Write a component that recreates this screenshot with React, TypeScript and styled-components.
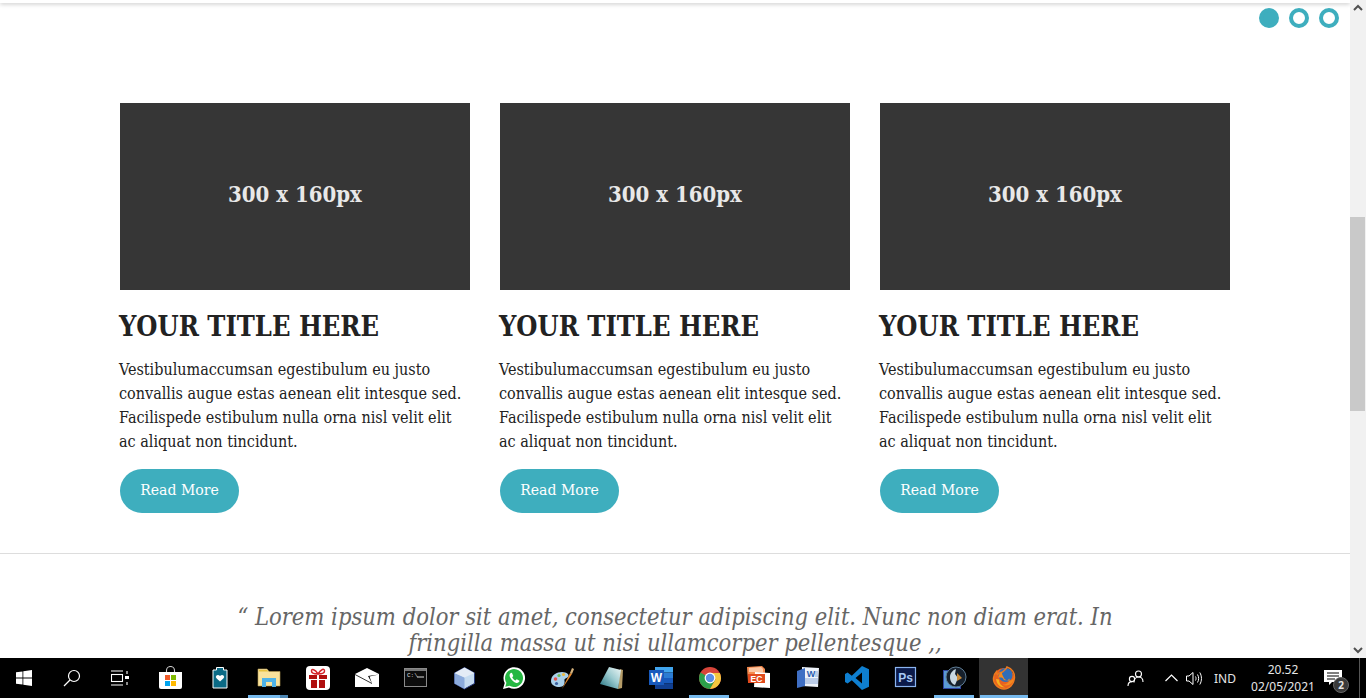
import React, { FC, ReactNode } from 'react'
import styled, { createGlobalStyle } from 'styled-components'

const SERIF = `'DejaVu Serif Condensed', 'DejaVu Serif', 'Liberation Serif', serif`
const TEAL = '#3eaebe'

const GlobalStyle = createGlobalStyle`
  html, body { margin: 0; padding: 0; height: 100%; overflow: hidden; background: #fff; }
  #root { height: 100%; }
  * { box-sizing: border-box; }
`

const Screen = styled.div`
  width: 1366px;
  height: 698px;
  display: flex;
  flex-direction: column;
  overflow: hidden;
  font-family: ${SERIF};
`
const Viewport = styled.div`
  flex: 1;
  min-height: 0;
  display: flex;
`
const Page = styled.main`
  flex: 1;
  min-width: 0;
  overflow: hidden;
  background: #fff;
`
const TopShadow = styled.div`
  height: 3px;
  background: #fff;
  box-shadow: 0 1px 4px rgba(0, 0, 0, 0.25);
`
const Dots = styled.div`
  display: flex;
  justify-content: flex-end;
  gap: 10px;
  padding: 5px 11px 0 0;
`
const Dot = styled.span<{ $active?: boolean }>`
  width: 20px;
  height: 20px;
  border-radius: 50%;
  border: 4px solid ${TEAL};
  background: ${(p) => (p.$active ? TEAL : '#fff')};
`
const Cards = styled.section`
  display: grid;
  grid-template-columns: repeat(3, 350px);
  gap: 30px;
  padding: 75px 0 40px 120px;
  border-bottom: 1px solid #ddd;
`
const Card = styled.article`
  display: flex;
  flex-direction: column;
  align-items: flex-start;
`
const Thumb = styled.div`
  width: 350px;
  height: 187px;
  background: #363636;
  color: #e8e8e8;
  display: flex;
  align-items: center;
  justify-content: center;
  font-size: 22px;
  font-weight: 700;
  padding-bottom: 6px;
`
const Title = styled.h3`
  margin: 19px 0 0 -1px;
  font-size: 27px;
  line-height: 36px;
  font-weight: 700;
  color: #222;
  white-space: nowrap;
`
const Body = styled.p`
  margin: 13px 0 0 -1px;
  font-size: 16px;
  line-height: 24px;
  color: #222;
  white-space: nowrap;
`
const ReadMore = styled.a`
  margin-top: 15px;
  width: 119px;
  height: 44px;
  padding-bottom: 2px;
  border-radius: 22px;
  background: ${TEAL};
  color: #fff;
  font-size: 15.6px;
  display: flex;
  align-items: center;
  justify-content: center;
`
const Quote = styled.blockquote`
  margin: 50px 0 0;
  text-align: center;
  font-size: 23.5px;
  line-height: 26px;
  font-style: italic;
  color: #666;
  white-space: nowrap;
`
const Scrollbar = styled.div`
  width: 16px;
  background: #f1f1f1;
  display: flex;
  flex-direction: column;
  align-items: center;
  justify-content: space-between;
  position: relative;
`
const ScrollThumb = styled.div`
  position: absolute;
  left: 0;
  top: 217px;
  width: 15px;
  height: 194px;
  background: #c9c9c9;
`
const Arrow = styled.svg`
  width: 16px;
  height: 16px;
  display: block;
`

const Taskbar = styled.footer`
  height: 40px;
  flex: none;
  background: #000;
  display: flex;
  align-items: stretch;
  color: #fff;
  font-family: 'Noto Sans', 'Liberation Sans', Arial, sans-serif;
`
const SystemSlot = styled.div`
  width: 48px;
  display: flex;
  align-items: center;
  justify-content: center;
`
const AppSlots = styled.div`
  display: flex;
  margin-left: 2px;
`
const AppSlot = styled.div<{ $open?: boolean; $focused?: boolean; $stacked?: boolean }>`
  width: 49px;
  position: relative;
  display: flex;
  align-items: center;
  justify-content: center;
  background: ${(p) => (p.$focused ? '#333' : 'transparent')};
  &::after {
    content: '';
    display: ${(p) => (p.$open ? 'block' : 'none')};
    position: absolute;
    bottom: 0;
    left: ${(p) => (p.$focused ? '1px' : '4px')};
    right: ${(p) => (p.$focused ? '0' : '5px')};
    height: 3px;
    background: ${(p) =>
      p.$stacked ? 'linear-gradient(to right, #76b9ed 80%, #4d86b3 80%)' : '#76b9ed'};
  }
`
const Tray = styled.div`
  margin-left: auto;
  display: flex;
  align-items: center;
  font-size: 12px;
  color: #e6e6e6;
`
const TrayIcon = styled.span<{ $width: number }>`
  width: ${(p) => p.$width}px;
  display: flex;
  justify-content: center;
`
const Clock = styled.div`
  width: 70px;
  margin-left: 1px;
  text-align: center;
  line-height: 17px;
  font-size: 12px;
  white-space: nowrap;
`
const Notify = styled.div`
  width: 30px;
  height: 100%;
  position: relative;
  display: flex;
  align-items: center;
  justify-content: center;
`
const Badge = styled.span`
  position: absolute;
  left: 15px;
  top: 19px;
  width: 16px;
  height: 16px;
  border-radius: 50%;
  background: #3a3a3a;
  border: 1px solid #666;
  font-size: 10px;
  font-weight: 700;
  display: flex;
  align-items: center;
  justify-content: center;
`
const ShowDesktop = styled.div`
  width: 7px;
  height: 100%;
  margin-left: 11px;
  border-left: 1px solid #555;
`

const Ico: FC<{ children: ReactNode }> = ({ children }) => (
  <svg width={24} height={24} viewBox="0 0 24 24" fill="none">
    {children}
  </svg>
)

const SANS = "'Liberation Sans', sans-serif"

const icons: { key: string; open?: boolean; focused?: boolean; stacked?: boolean; svg: ReactNode }[] = [
  {
    key: 'store',
    svg: (
      <Ico>
        <path d="M7.500 7V4.500a4 4 0 0 1 8 0V7" stroke="#ccc" strokeWidth="1.100" />
        <path d="M0 6h23v15a2 2 0 0 1-2 2H2a2 2 0 0 1-2-2z" fill="#fff" />
        <rect x="6" y="9" width="5" height="5" fill="#ef5a29" />
        <rect x="12" y="9" width="5" height="5" fill="#7fba00" />
        <rect x="6" y="15" width="5" height="5" fill="#00a4ef" />
        <rect x="12" y="15" width="5" height="5" fill="#ffb900" />
      </Ico>
    ),
  },
  {
    key: 'battery',
    svg: (
      <Ico>
        <path d="M8.500 1.500h7v2.500h3.500v18H5V4h3.500z" fill="#0b6a85" stroke="#fff" strokeWidth="1" />
        <path d="M12 15.500l-3.300-3a2 2 0 0 1-.2-3c.9-.8 2.300-.7 3.500.5 1.200-1.200 2.600-1.300 3.500-.5a2 2 0 0 1-.2 3z" fill="#fff" />
      </Ico>
    ),
  },
  {
    key: 'files',
    open: true,
    stacked: true,
    svg: (
      <Ico>
        <path d="M1 3h9l2 2.500h11V20H1z" fill="#f9e29c" stroke="#b59a52" strokeWidth=".6" />
        <path d="M2 4h8l1.200 1.500H2z" fill="#e8c13f" />
        <path d="M5 12h14v9h-4v-5H9v5H5z" fill="#4fb3e8" />
      </Ico>
    ),
  },
  {
    key: 'gift',
    svg: (
      <Ico>
        <rect width="24" height="24" rx="4" fill="#fff" />
        <path d="M3 9h8v4H3zM13 9h8v4h-8zM5 14h6v8H5zM13 14h6v8h-6z" fill="#b00f0f" />
        <path d="M12 8C9 3 5.500 2.500 5.500 5S9 8 12 8c3 0 6.500 0 6.500-3S15 3 12 8z" stroke="#d4232a" strokeWidth="1.500" />
      </Ico>
    ),
  },
  {
    key: 'mail',
    svg: (
      <Ico>
        <path d="M12 2l12 6v13H0V8z" fill="#fff" />
        <path d="M24 8.500L13 10l4 7.500-2.500-7z" fill="#000" />
        <path d="M0 8.500L17 17.500" stroke="#000" strokeWidth=".8" />
      </Ico>
    ),
  },
  {
    key: 'cmd',
    svg: (
      <Ico>
        <rect x=".5" y="2.500" width="22" height="18" fill="#0c0c0c" stroke="#8a8a8a" />
        <rect x="1" y="3" width="21" height="2" fill="#777" />
        <text x="3" y="11" fontSize="6" fill="#ddd" fontFamily="'Liberation Mono', monospace">C:\</text>
        <path d="M13 11h7" stroke="#ddd" />
      </Ico>
    ),
  },
  {
    key: 'cube',
    svg: (
      <Ico>
        <path d="M11.500 1.500l10 5.500v10.500l-10 5.500-10-5.500V7z" fill="#c6dcf0" stroke="#26387a" />
        <path d="M11.500 11.500v11.500l-10-5.500V7z" fill="#8cabdc" />
        <path d="M11.500 1.500l10 5.500-10 4.500L1.500 7z" fill="#e4ecf6" />
      </Ico>
    ),
  },
  {
    key: 'whatsapp',
    svg: (
      <Ico>
        <path d="M1 23l1.700-6A10.800 10.800 0 1 1 7 21.400z" fill="#fff" />
        <path d="M3.300 20.700l1.100-3.900a9 9 0 1 1 3.100 3z" fill="#25b742" />
        <path d="M9 6.800c-1.600 1-1.900 2.700-.7 5 1.400 2.600 3.500 4.500 6 5.100 1.600.3 3-.7 3.200-2.200l-2.800-1.500-1.200 1.300c-1.400-.6-2.600-1.800-3.300-3.300l1.100-1.200-1.300-2.900z" fill="#fff" />
      </Ico>
    ),
  },
  {
    key: 'paint',
    svg: (
      <Ico>
        <path d="M0 15C0 9 6 6 11 6c5 0 8 3 6 5s-4 1-3.500 4-1 6-5 6S0 19 0 15z" fill="#a9d0ea" />
        <circle cx="4.500" cy="13" r="1.800" fill="#e3534f" />
        <circle cx="8" cy="9.500" r="1.600" fill="#6dbb58" />
        <circle cx="12.500" cy="8.500" r="1.600" fill="#efb93f" />
        <circle cx="5.500" cy="17.500" r="1.600" fill="#3a5f9e" />
        <path d="M11 23l8-16 2 1z" fill="#e88a2c" />
        <path d="M19 7l2-5 2 1-2 5z" fill="#d6b27c" />
      </Ico>
    ),
  },
  {
    key: 'notes',
    svg: (
      <Ico>
        <defs>
          <linearGradient id="notesFill" x1="0" y1="1" x2="1" y2="0">
            <stop offset="0" stopColor="#20717f" />
            <stop offset=".55" stopColor="#9ccbd0" />
            <stop offset="1" stopColor="#f0f7f6" />
          </linearGradient>
        </defs>
        <path d="M20 3l3 1-1 18-4 1z" fill="#b59c68" />
        <path d="M9 1l12 3-3 19L0 18z" fill="url(#notesFill)" />
      </Ico>
    ),
  },
  {
    key: 'word',
    svg: (
      <Ico>
        <path d="M6 1h18v5.500H6z" fill="#41a5ee" />
        <path d="M6 6.500h18V12H6z" fill="#2b7cd3" />
        <path d="M6 12h18v5.500H6z" fill="#185abd" />
        <path d="M6 17.500h18V23H6z" fill="#103f91" />
        <rect x="0" y="4" width="15" height="15" fill="#185abd" />
        <text x="7.500" y="16" textAnchor="middle" fontSize="12" fontWeight="700" fill="#fff" fontFamily={SANS}>W</text>
      </Ico>
    ),
  },
  {
    key: 'chrome',
    open: true,
    svg: (
      <Ico>
        <circle cx="12" cy="12" r="11" fill="#d8453a" />
        <path d="M12 12L2.500 6.500A11 11 0 0 0 12 23l5.500-9.500z" fill="#2c9f4b" />
        <path d="M12 7h9.800A11 11 0 0 1 12 23l5.500-9.500z" fill="#f4c83f" />
        <circle cx="12" cy="12" r="5.400" fill="#fff" />
        <circle cx="12" cy="12" r="4.200" fill="#5b8ee6" />
      </Ico>
    ),
  },
  {
    key: 'ppt',
    svg: (
      <Ico>
        <path d="M0 1l15-1 3 3v13H1z" fill="#f58a4e" />
        <path d="M2 2l12-1 2 2v3H2z" fill="#fbc7a4" />
        <path d="M8 6l15 1 0 15-16-1z" fill="#fff" />
        <rect x="1" y="8" width="17" height="9" fill="#e24a1c" />
        <text x="9.500" y="15.700" textAnchor="middle" fontSize="8.500" fontWeight="700" fill="#fff" fontFamily={SANS}>EC</text>
      </Ico>
    ),
  },
  {
    key: 'word-old',
    svg: (
      <Ico>
        <path d="M6 1l17 1-1 19-16-1z" fill="#eef3fa" />
        <path d="M1 5l8-3v18l-8 2z" fill="#3f6fc4" />
        <text x="15" y="11" textAnchor="middle" fontSize="9" fontWeight="700" fill="#2a5db0" fontFamily={SANS}>W</text>
        <path d="M19 6h3M19 8h3M19 10h3M9 13h13M9 15h13M9 17h13" stroke="#7d9ed2" strokeWidth=".9" />
      </Ico>
    ),
  },
  {
    key: 'vscode',
    svg: (
      <Ico>
        <path d="M17 0l7 3.200v17.600L17 24 6.800 14.300 2.600 17.500 0 16V8l2.600-1.500 4.200 3.200zM17 6.500L10.500 12l6.500 5.500z" fill="#0e7fd0" />
      </Ico>
    ),
  },
  {
    key: 'photoshop',
    svg: (
      <Ico>
        <rect x="1.500" y="1.500" width="20" height="19" fill="#0b1a4a" stroke="#8ab4f0" strokeWidth="1.200" />
        <text x="11.500" y="16" textAnchor="middle" fontSize="12" fontWeight="700" fill="#a5c8f5" fontFamily={SANS}>Ps</text>
      </Ico>
    ),
  },
  {
    key: 'media',
    open: true,
    svg: (
      <Ico>
        <rect x=".5" y="4.500" width="17" height="18" fill="#5a9ad6" stroke="#2f44a0" />
        <circle cx="13" cy="11" r="10" fill="#16202c" stroke="#5f7d96" />
        <path d="M7 11c0-4 3-7 6-8l-1 5 3 4-3 7c-3-1-5-4-5-8z" fill="#c9d8e2" />
        <path d="M14 7l5 5-5 3z" fill="#c98a38" />
      </Ico>
    ),
  },
  {
    key: 'firefox',
    open: true,
    focused: true,
    svg: (
      <Ico>
        <circle cx="12" cy="12.500" r="10.500" fill="#e8621f" />
        <circle cx="13.500" cy="9" r="7" fill="#2f6db8" />
        <path d="M15 1c5 1.500 8 6 7.500 11-.5 6-5 11-10.500 11S1 18 1.500 12c.2-2.500 1.500-5 3-6.500 0 1.500.3 2.500 1 3C7 7 9 6 10.500 6 12 4.500 14.500 3 15 1z" fill="none" stroke="#ee7a1e" strokeWidth="1.500" />
        <path d="M10 6c-2.500 1-4 3.500-3.500 6 2-1 4.500-.5 5 1.500 1.500 1.500 4.500 1 6-1 .5 3-2.500 6.500-7 6 5 3 11.500-1 11-6.500-2 4-6 3-9 1-1-2-3-5-2.500-7z" fill="#f28a1e" />
        <path d="M4 13c.5 5 4 8.500 9 8.500-4-1.500-6-4.500-6-8z" fill="#f6b01e" />
      </Ico>
    ),
  },
]

const CARD_LINES = [
  'Vestibulumaccumsan egestibulum eu justo',
  'convallis augue estas aenean elit intesque sed.',
  'Facilispede estibulum nulla orna nisl velit elit',
  'ac aliquat non tincidunt.',
]

const App: FC = () => (
  <>
    <GlobalStyle />
    <Screen>
      <Viewport>
        <Page>
          <TopShadow />
          <Dots>
            <Dot $active />
            <Dot />
            <Dot />
          </Dots>
          <Cards>
            {[0, 1, 2].map((i) => (
              <Card key={i}>
                <Thumb>300 x 160px</Thumb>
                <Title>YOUR TITLE HERE</Title>
                <Body>
                  {CARD_LINES.map((line) => (
                    <React.Fragment key={line}>
                      {line}
                      <br />
                    </React.Fragment>
                  ))}
                </Body>
                <ReadMore>Read More</ReadMore>
              </Card>
            ))}
          </Cards>
          <Quote>
            “ Lorem ipsum dolor sit amet, consectetur adipiscing elit. Nunc non diam erat. In
            <br />
            fringilla massa ut nisi ullamcorper pellentesque ,,
          </Quote>
        </Page>
        <Scrollbar>
          <Arrow viewBox="0 0 16 16">
            <path d="M4 10l4-4 4 4" stroke="#505050" strokeWidth="2" fill="none" />
          </Arrow>
          <ScrollThumb />
          <Arrow viewBox="0 0 16 16">
            <path d="M4 6l4 4 4-4" stroke="#505050" strokeWidth="2" fill="none" />
          </Arrow>
        </Scrollbar>
      </Viewport>
      <Taskbar>
        <SystemSlot>
          <svg width="16" height="16" viewBox="0 0 16 16">
            <path d="M0 2.300l6.500-.9v6.200H0zM7.300 1.300L16 0v7.600H7.300zM0 8.400h6.500v6.200L0 13.700zM7.300 8.400H16V16l-8.700-1.300z" fill="#fff" />
          </svg>
        </SystemSlot>
        <SystemSlot>
          <svg width="18" height="18" viewBox="0 0 18 18" fill="none" stroke="#fff" strokeWidth="1.200">
            <circle cx="11" cy="7" r="5.500" />
            <path d="M7 11l-6 6" />
          </svg>
        </SystemSlot>
        <SystemSlot>
          <svg width="18" height="16" viewBox="0 0 18 16" fill="none" stroke="#fff" strokeWidth="1.100">
            <path d="M0 1h12M0 15h12" />
            <rect x=".5" y="4.500" width="11" height="7" />
            <path d="M16 1v3M16 12v3" />
            <rect x="14" y="6" width="4" height="3" fill="#fff" stroke="none" />
          </svg>
        </SystemSlot>
        <AppSlots>
          {icons.map((item) => (
            <AppSlot key={item.key} $open={item.open} $focused={item.focused} $stacked={item.stacked}>
              {item.svg}
            </AppSlot>
          ))}
        </AppSlots>
        <Tray>
          <TrayIcon $width={44}>
            <svg width="17" height="17" viewBox="0 0 17 17" fill="none" stroke="#fff" strokeWidth="1.100">
              <circle cx="11.500" cy="4" r="3" />
              <path d="M7 12.500c0-3 1.800-5.500 4.500-5.500s4.500 2 4.500 5" />
              <circle cx="5" cy="9" r="2.600" />
              <path d="M1 16c0-2.500 1.500-4.400 4-4.400" />
            </svg>
          </TrayIcon>
          <TrayIcon $width={28}>
            <svg width="13" height="8" viewBox="0 0 13 8" fill="none" stroke="#fff" strokeWidth="1.200">
              <path d="M.5 7l6-6 6 6" />
            </svg>
          </TrayIcon>
          <TrayIcon $width={18}>
            <svg width="17" height="15" viewBox="0 0 17 15" fill="none" stroke="#fff" strokeWidth="1">
              <path d="M.5 5h2.500L7 1.500v12L3 10H.5z" />
              <path d="M9.500 5.500c.7 1.200.7 2.800 0 4M11.500 3.500c1.500 2.400 1.500 5.600 0 8M13.800 1.500c2.200 3.600 2.200 8.400 0 12" />
            </svg>
          </TrayIcon>
          <TrayIcon $width={44}>IND</TrayIcon>
          <Clock>
            20.52
            <br />
            02/05/2021
          </Clock>
          <Notify>
            <svg width="18" height="16" viewBox="0 0 18 16">
              <path d="M0 0h18v12H8l-3 3v-3H0z" fill="#fff" />
              <path d="M3 3h12M3 6h12M3 9h8" stroke="#000" />
            </svg>
            <Badge>2</Badge>
          </Notify>
          <ShowDesktop />
        </Tray>
      </Taskbar>
    </Screen>
  </>
)

export default App
